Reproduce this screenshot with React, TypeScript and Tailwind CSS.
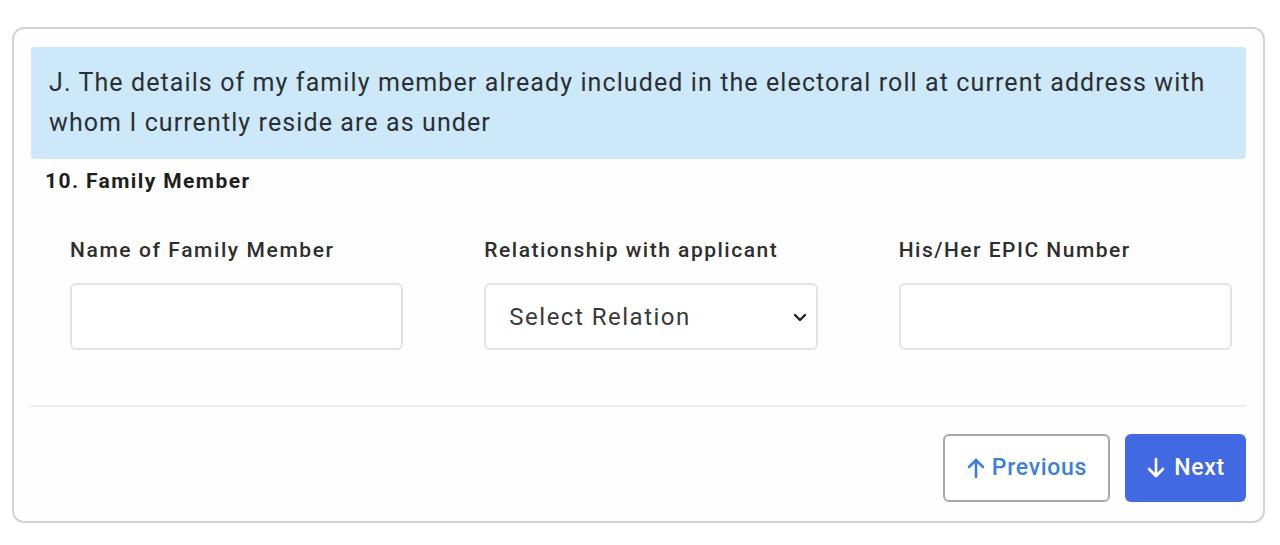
import React from "react";

export default function App() {
  return (
    <div
      className="w-[1280px] h-[545px] bg-white pt-[27px] pl-[12px]"
      style={{ fontFamily: "Roboto, 'Liberation Sans', sans-serif" }}
    >
      <div className="w-[1253px] h-[496px] border-2 border-[#d3d3d3] rounded-[12px] bg-[#fefefe] px-[17px] pt-[18px]">
        <div className="bg-[#cce8f9] rounded-[4px] pl-[18px] pr-[8px] py-[16px] text-[25px] leading-[40px] tracking-[1.1px] text-[#2b2f33]">
          J. The details of my family member already included in the electoral roll at current address with whom I currently reside are as under
        </div>
        <div className="pl-[14px] mt-[10px] text-[21px] leading-[24px] font-bold tracking-[1.4px] text-[#1f1f1f]">
          10. Family Member
        </div>
        <div className="pl-[39px] pr-[14px] mt-[45px] grid grid-cols-3 gap-x-[81px]">
          <div className="flex flex-col">
            <label className="text-[21px] leading-[24px] font-medium tracking-[1.6px] text-[#2e2e2e] mb-[21px]">
              Name of Family Member
            </label>
            <input className="h-[67px] border-2 border-[#e3e3e3] rounded-[6px] bg-white outline-none" />
          </div>
          <div className="flex flex-col">
            <label className="text-[21px] leading-[24px] font-medium tracking-[1.5px] text-[#2e2e2e] mb-[21px]">
              Relationship with applicant
            </label>
            <div className="h-[67px] border-2 border-[#e3e3e3] rounded-[6px] bg-white flex items-center justify-between pl-[23px] pr-[8px]">
              <span className="text-[24px] tracking-[1.5px] text-[#3a3a3a]">Select Relation</span>
              <svg width="16" height="16" viewBox="0 0 16 16" fill="none">
                <path d="M3 6l5 5 5-5" stroke="#222" strokeWidth="2.4" strokeLinecap="round" strokeLinejoin="round" />
              </svg>
            </div>
          </div>
          <div className="flex flex-col">
            <label className="text-[21px] leading-[24px] font-medium tracking-[1.5px] text-[#2e2e2e] mb-[21px]">
              His/Her EPIC Number
            </label>
            <input className="h-[67px] border-2 border-[#e3e3e3] rounded-[6px] bg-white outline-none" />
          </div>
        </div>
        <div className="mt-[55px] h-[2px] bg-[#ececec]" />
        <div className="mt-[27px] flex justify-end gap-[15px]">
          <button className="w-[167px] h-[68px] border-2 border-[#a8a8a8] rounded-[6px] bg-white flex items-center justify-center gap-[6px] text-[23px] font-medium tracking-[0.7px] text-[#3d7fd9]">
            <svg width="20" height="22" viewBox="0 0 20 22" fill="none">
              <path d="M10 20V3M3 10l7-7 7 7" stroke="#3d7fd9" strokeWidth="2.6" strokeLinecap="round" strokeLinejoin="round" />
            </svg>
            Previous
          </button>
          <button className="w-[121px] h-[68px] rounded-[6px] bg-[#4169e1] flex items-center justify-center gap-[8px] text-[23px] font-medium tracking-[0.7px] text-white">
            <svg width="20" height="22" viewBox="0 0 20 22" fill="none">
              <path d="M10 2v17M3 12l7 7 7-7" stroke="#fff" strokeWidth="2.6" strokeLinecap="round" strokeLinejoin="round" />
            </svg>
            Next
          </button>
        </div>
      </div>
    </div>
  );
}
